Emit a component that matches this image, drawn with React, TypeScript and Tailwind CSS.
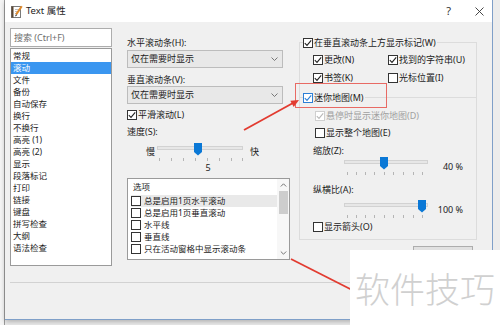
import React from "react";

const listItems = [
  "常规", "滚动", "文件", "备份", "自动保存", "换行", "不换行", "高亮 (1)", "高亮 (2)",
  "显示", "段落标记", "打印", "链接", "键盘", "拼写检查", "大纲", "语法检查",
];

const options = ["总是启用1页水平滚动", "总是启用1页垂直滚动", "水平线", "垂直线", "只在活动窗格中显示滚动条"];

type Tone = "normal" | "blue" | "disabled";

const Check = ({checked, tone = "normal"}: {checked?: boolean; tone?: Tone}) => {
  const border = tone === "blue" ? "border-[#2c7fd6]" : tone === "disabled" ? "border-[#cfcfcf]" : "border-[#333333]";
  const stroke = tone === "blue" ? "#2c7fd6" : tone === "disabled" ? "#b8b8b8" : "#222222";
  return (
    <span className={`w-[10px] h-[10px] shrink-0 border bg-white flex items-center justify-center ${border}`}>
      {checked && (
        <svg width="8" height="8" viewBox="0 0 8 8">
          <path d="M0.8 4.2 L3 6.4 L7.2 1.4" fill="none" stroke={stroke} strokeWidth="1.1"/>
        </svg>
      )}
    </span>
  );
};

const CheckRow = ({label, checked, tone, className = ""}: {
  label: string; checked?: boolean; tone?: Tone; className?: string
}) => (
  <div className={`flex items-center gap-[1px] h-[12px] leading-[12px] ${className}`}>
    <Check checked={checked} tone={tone}/>
    <span className={tone === "disabled" ? "text-[#a0a0a0]" : ""}>{label}</span>
  </div>
);

// track + thumb + ticks, drawn in one svg
const Slider = ({width, thumb, ticks, track = 5}: {width: number; thumb: number; ticks: number[]; track?: number}) => (
  <svg width={width} height={19} className="shrink-0">
    <rect x={2.5} y={track - 1.5} width={width - 5} height={3} fill="#e7e7e7" stroke="#d2d2d2" strokeWidth="1"/>
    {ticks.map(t => (
      <rect key={t} x={t} y={track + 10} width={1} height={3} fill="#b5b5b5"/>
    ))}
    <path d={`M${thumb - 4} ${track - 5} h8 v9 l-4 3.5 l-4 -3.5 z`} fill="#0a78d6"/>
  </svg>
);

const Combo = ({text}: {text: string}) => (
  <div className="w-[156px] h-[18px] border border-[#bcbcbc] bg-[#e8e8e8] flex items-center justify-between pl-[3px] pr-[4px] leading-[12px]">
    <span>{text}</span>
    <svg width="7" height="4" viewBox="0 0 7 4">
      <path d="M0.5 0.5 L3.5 3.5 L6.5 0.5" fill="none" stroke="#6a6a6a" strokeWidth="0.9"/>
    </svg>
  </div>
);

const TitleIcon = () => (
  <svg width="13" height="13" viewBox="0 0 13 13">
    <rect x="1.5" y="1.5" width="9" height="11" fill="#fff" stroke="#7a7a7a"/>
    <rect x="1.5" y="1.5" width="2" height="11" fill="#5a4632"/>
    <path d="M5 4.5 h4 M5 6.5 h4 M5 8.5 h3" stroke="#b0b0b0" strokeWidth="0.8"/>
    <path d="M11.8 1.2 L6.2 9.4" stroke="#e08a2a" strokeWidth="2"/>
    <path d="M6.2 9.4 L5.6 11 L6.9 10" stroke="#333" strokeWidth="0.8" fill="none"/>
  </svg>
);

export default function App() {
  const zoomTicks = [5, 14, 23, 32, 42, 51, 61, 71, 80];
  return (
    <div className="w-[500px] h-[325px] relative overflow-hidden bg-[#ededed] flex font-['Noto_Sans','Noto_Sans_CJK_SC',sans-serif] text-[9px] text-[#1c1c1c]">
      <div className="w-[5px] h-full bg-[#f5f5f5] border-r border-[#9c9c9c]"/>

      <div className="w-[488px] h-[320px] flex flex-col border-r border-b border-[#7f9fc8] shadow-[0_2px_5px_rgba(0,0,0,0.25)]">
        {/* title bar */}
        <div className="h-[22px] bg-white flex items-center pl-[5px] pr-[8px]">
          <TitleIcon/>
          <span className="ml-[3px] text-[9.5px] leading-[12px]">Text 属性</span>
          <span className="ml-auto text-[11px] leading-[12px] text-[#333]">?</span>
          <svg width="9" height="9" viewBox="0 0 9 9" className="ml-[24px]">
            <path d="M0.5 0.5 L8.5 8.5 M8.5 0.5 L0.5 8.5" stroke="#333" strokeWidth="0.9"/>
          </svg>
        </div>

        {/* body */}
        <div className="flex-1 bg-[#f0f0f0] flex flex-col">
          <div className="flex pl-[5px]">
            {/* left column */}
            <div className="w-[102px] pt-[6px] flex flex-col">
              <div className="h-[19px] border border-[#adadad] bg-white pl-[3px] leading-[17px] text-[#6d6d6d]">搜索 (Ctrl+F)</div>
              <div className="mt-[1px] h-[218px] border border-[#9a9a9a] bg-white pt-[1px] flex flex-col text-[8.5px]">
                {listItems.map(item => (
                  <div key={item}
                       className={`h-[12px] leading-[12px] pl-[2px] ${item === "滚动" ? "bg-[#3a96f0] text-white" : ""}`}>
                    {item}
                  </div>
                ))}
              </div>
            </div>

            {/* middle column */}
            <div className="ml-[15px] w-[163px] flex flex-col">
              <div className="mt-[15px] h-[12px] leading-[12px]">水平滚动条(H):</div>
              <div className="mt-[1px]"><Combo text="仅在需要时显示"/></div>
              <div className="mt-[6px] h-[12px] leading-[12px]">垂直滚动条(V):</div>
              <div className="mt-0"><Combo text="仅在需要时显示"/></div>
              <CheckRow className="mt-[5px]" label="平滑滚动(L)" checked/>
              <div className="mt-[5px] h-[12px] leading-[12px]">速度(S):</div>
              <div className="mt-[4px] flex items-center h-[19px]">
                <span className="ml-[19px] w-[9px] leading-[12px]">慢</span>
                <Slider width={90} thumb={43} ticks={[4, 16, 28, 40, 52, 64, 76, 87]}
                        track={6}/>
                <span className="ml-[5px] leading-[12px]">快</span>
              </div>
              <div className="mt-[1px] ml-[37px] w-[88px] h-[12px] leading-[12px] text-center">5</div>

              <div className="mt-[4px] h-[82px] border border-[#9a9a9a] bg-white flex text-[8.5px]">
                <div className="flex-1 flex flex-col pt-[2px] pl-[3px]">
                  <div className="h-[12px] leading-[12px] pl-[2px]">选项</div>
                  <div className="mt-[2px] flex flex-col">
                    {options.map((o, i) => (
                      <div key={o}
                           className={`h-[12px] flex items-center gap-[3px] leading-[12px] ${i === 0 ? "bg-[#e9e9e9]" : ""}`}>
                        <Check/>
                        <span>{o}</span>
                      </div>
                    ))}
                  </div>
                </div>
                <div className="w-[12px] flex flex-col items-center bg-[#f7f7f7]">
                  <svg width="7" height="12" viewBox="0 0 7 12">
                    <path d="M0.8 7.5 L3.5 4.8 L6.2 7.5" fill="none" stroke="#666" strokeWidth="0.9"/>
                  </svg>
                  <div className="w-[9px] h-[23px] bg-[#cdcdcd]"/>
                  <div className="flex-1"/>
                  <svg width="7" height="12" viewBox="0 0 7 12">
                    <path d="M0.8 4.5 L3.5 7.2 L6.2 4.5" fill="none" stroke="#666" strokeWidth="0.9"/>
                  </svg>
                </div>
              </div>
            </div>

            {/* right column */}
            <div className="ml-[9px] w-[178px] flex flex-col">
              <div className="mt-[20px] h-[55px] border-t border-x border-[#dcdcdc] flex flex-col">
                <CheckRow className="-mt-[6px] ml-[3px] w-fit bg-[#f0f0f0] pr-[1px]" label="在垂直滚动条上方显示标记(W)" checked/>
                <div className="mt-[5px] flex pl-[13px]">
                  <CheckRow className="w-[75px]" label="更改(N)" checked/>
                  <CheckRow label="找到的字符串(U)" checked/>
                </div>
                <div className="mt-[6px] flex pl-[13px]">
                  <CheckRow className="w-[75px]" label="书签(K)" checked/>
                  <CheckRow label="光标位置(I)"/>
                </div>
              </div>

              <div className="h-[143px] border border-[#dcdcdc] flex flex-col">
                <CheckRow className="-mt-[6px] ml-[3px] w-fit bg-[#f0f0f0] pr-[1px]" label="迷你地图(M)" checked tone="blue"/>
                <CheckRow className="mt-[6px] ml-[15px]" label="悬停时显示迷你地图(D)" checked tone="disabled"/>
                <CheckRow className="mt-[5px] ml-[15px]" label="显示整个地图(E)"/>
                <div className="mt-[6px] ml-[13px] h-[12px] leading-[12px]">缩放(Z):</div>
                <div className="flex items-center">
                  <div className="ml-[42px]">
                    <Slider width={88} thumb={42} ticks={zoomTicks}/>
                  </div>
                  <div className="w-[33px] text-right leading-[12px]">40 %</div>
                </div>
                <div className="mt-[8px] ml-[13px] h-[12px] leading-[12px]">纵横比(A):</div>
                <div className="mt-[4px] flex items-center">
                  <div className="ml-[42px]">
                    <Slider width={88} thumb={80} ticks={zoomTicks}/>
                  </div>
                  <div className="w-[33px] text-right leading-[12px]">100 %</div>
                </div>
                <CheckRow className="mt-[2px] ml-[13px]" label="显示箭头(O)"/>
              </div>

              <div className="mt-[6px] ml-[114px] w-[60px] h-[20px] border border-[#adadad] bg-[#e1e1e1] flex items-center justify-center leading-[12px]">
                设置(T)...
              </div>
            </div>
          </div>

          <div className="mt-[16px] mx-[5px] border-t border-[#d2d2d2]"/>
        </div>
      </div>

      <div className="flex-1 h-full bg-[#ececec]"/>

      {/* annotations */}
      <div className="absolute left-[295px] top-[83px] w-[92px] h-[25px] border border-[#e86a64]"/>
      <svg className="absolute left-0 top-0 pointer-events-none" width="500" height="325">
        <line x1="244" y1="130" x2="293" y2="103" stroke="#e23b30" strokeWidth="1.8"/>
        <polygon points="299,100 293.7,107 290.3,100.8" fill="#e23b30"/>
        <line x1="291" y1="259" x2="362" y2="295" stroke="#e23b30" strokeWidth="1.8"/>
      </svg>
      <div className="absolute left-[350px] top-[250px] w-[150px] h-[75px] bg-white flex items-center justify-center">
        <span className="text-[35px] leading-[40px] text-[#d0d0d0] font-['Noto_Sans_CJK_SC',sans-serif] font-light">软件技巧</span>
      </div>
    </div>
  );
}
